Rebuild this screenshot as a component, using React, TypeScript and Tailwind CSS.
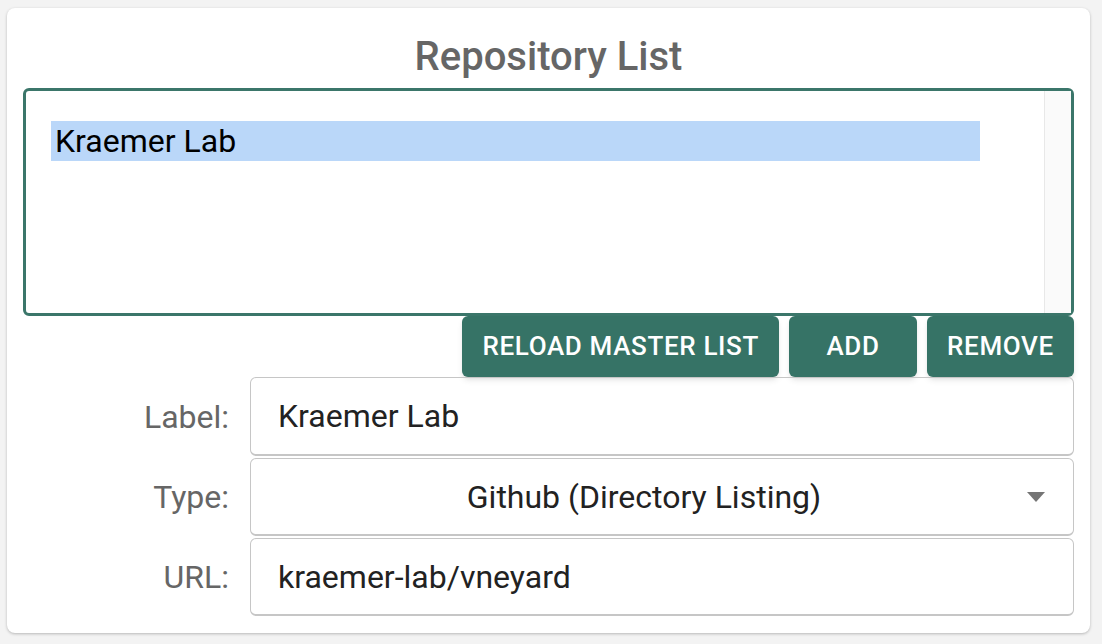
const font = { fontFamily: 'Roboto, "Liberation Sans", sans-serif' }

function FieldRow({ label, children }: { label: string; children: React.ReactNode }) {
  return (
    <div className="flex items-center">
      <label className="w-[206px] shrink-0 text-right text-[32px] text-[#666666]">{label}</label>
      <div className="ml-[21px] flex-1">{children}</div>
    </div>
  )
}

export default function App() {
  return (
    <div className="min-h-screen bg-[#f3f3f3] pt-2 pl-[7px]" style={font}>
      <div className="w-[1083px] rounded-lg bg-white px-4 pt-[25px] pb-[17px] shadow-[0_1px_3px_rgba(0,0,0,0.25)]">
        <h1 className="text-center text-[40px] leading-[48px] font-medium text-[#666666]">Repository List</h1>

        <div className="mt-[7px] flex h-[228px] rounded-md border-[3px] border-[#3b766a]">
          <div className="flex-1 pt-[30px] pl-[25px] pr-[64px]">
            <div className="flex h-[40px] items-center bg-[#bad7f9] pl-[4px] text-[32px] text-black">Kraemer Lab</div>
          </div>
          <div className="w-[27px] border-l border-[#e8e8e8] bg-[#fafafa]" />
        </div>

        <div className="flex justify-end gap-[10px]">
          <button className="h-[61px] rounded-md bg-[#367366] px-[20px] text-[26px] font-medium tracking-wide text-white shadow-md">
            RELOAD MASTER LIST
          </button>
          <button className="h-[61px] w-[128px] rounded-md bg-[#367366] text-[26px] font-medium tracking-wide text-white shadow-md">
            ADD
          </button>
          <button className="h-[61px] w-[147px] rounded-md bg-[#367366] text-[26px] font-medium tracking-wide text-white shadow-md">
            REMOVE
          </button>
        </div>

        <div className="flex flex-col gap-[2px]">
          <FieldRow label="Label:">
            <div className="flex h-[79px] items-center rounded-md border border-b-2 border-[#c6c6c6] px-[27px] text-[32px] text-[#222222]">
              Kraemer Lab
            </div>
          </FieldRow>
          <FieldRow label="Type:">
            <div className="flex h-[78px] items-center rounded-md border border-b-2 border-[#c6c6c6] pr-[28px] pl-[27px] text-[32px] text-[#222222]">
              <span className="flex-1 text-center">Github (Directory Listing)</span>
              <svg width="18" height="10" viewBox="0 0 18 10" className="ml-[17px]">
                <path d="M0 0 L18 0 L9 10 Z" fill="#757575" />
              </svg>
            </div>
          </FieldRow>
          <FieldRow label="URL:">
            <div className="flex h-[78px] items-center rounded-md border border-b-2 border-[#c6c6c6] px-[27px] text-[32px] text-[#222222]">
              kraemer-lab/vneyard
            </div>
          </FieldRow>
        </div>
      </div>
    </div>
  )
}
